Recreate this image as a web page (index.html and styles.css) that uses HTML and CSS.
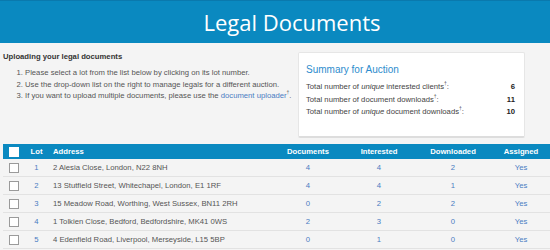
FILE: index.html
```html
<!DOCTYPE html>
<html lang="en">
<head>
    <meta charset="UTF-8">
    <meta name="viewport" content="width=device-width, initial-scale=1.0">
    <link rel="stylesheet" href="styles.css">
    <title>Legal Documents</title>
</head>
<body>

    <div class="banner">
        <h1>Legal Documents</h1>
    </div>

    <div class="intro">
        <div class="help">
            <h3>Uploading your legal documents</h3>
            <ol>
                <li>Please select a lot from the list below by clicking on its lot number.</li>
                <li>Use the drop-down list on the right to manage legals for a different auction.</li>
                <li>If you want to upload multiple documents, please use the <a href="#">document uploader</a><sup>†</sup>.</li>
            </ol>
        </div>

        <div class="summary">
            <h2>Summary for Auction</h2>
            <div class="summary-row">
                <span>Total number of <em>unique</em> interested clients<sup>†</sup>:</span>
                <b>6</b>
            </div>
            <div class="summary-row">
                <span>Total number of document downloads<sup>†</sup>:</span>
                <b>11</b>
            </div>
            <div class="summary-row">
                <span>Total number of <em>unique</em> document downloads<sup>†</sup>:</span>
                <b>10</b>
            </div>
        </div>
    </div>

    <table class="lots">
        <thead>
            <tr>
                <th class="col-check"><span class="box box-head"></span></th>
                <th class="col-lot">Lot</th>
                <th class="col-address">Address</th>
                <th class="col-docs">Documents</th>
                <th class="col-int">Interested</th>
                <th class="col-down">Downloaded</th>
                <th class="col-assigned">Assigned</th>
            </tr>
        </thead>
        <tbody>
            <tr>
                <td><span class="box"></span></td>
                <td class="num"><a href="#">1</a></td>
                <td class="address">2 Alesia Close, London, N22 8NH</td>
                <td class="num"><a href="#">4</a></td>
                <td class="num"><a href="#">4</a></td>
                <td class="num"><a href="#">2</a></td>
                <td class="num"><a href="#">Yes</a></td>
            </tr>
            <tr>
                <td><span class="box"></span></td>
                <td class="num"><a href="#">2</a></td>
                <td class="address">13 Stutfield Street, Whitechapel, London, E1 1RF</td>
                <td class="num"><a href="#">4</a></td>
                <td class="num"><a href="#">4</a></td>
                <td class="num"><a href="#">1</a></td>
                <td class="num"><a href="#">Yes</a></td>
            </tr>
            <tr>
                <td><span class="box"></span></td>
                <td class="num"><a href="#">3</a></td>
                <td class="address">15 Meadow Road, Worthing, West Sussex, BN11 2RH</td>
                <td class="num"><a href="#">0</a></td>
                <td class="num"><a href="#">2</a></td>
                <td class="num"><a href="#">2</a></td>
                <td class="num"><a href="#">Yes</a></td>
            </tr>
            <tr>
                <td><span class="box"></span></td>
                <td class="num"><a href="#">4</a></td>
                <td class="address">1 Tolkien Close, Bedford, Bedfordshire, MK41 0WS</td>
                <td class="num"><a href="#">2</a></td>
                <td class="num"><a href="#">3</a></td>
                <td class="num"><a href="#">0</a></td>
                <td class="num"><a href="#">Yes</a></td>
            </tr>
            <tr>
                <td><span class="box"></span></td>
                <td class="num"><a href="#">5</a></td>
                <td class="address">4 Edenfield Road, Liverpool, Merseyside, L15 5BP</td>
                <td class="num"><a href="#">0</a></td>
                <td class="num"><a href="#">1</a></td>
                <td class="num"><a href="#">0</a></td>
                <td class="num"><a href="#">Yes</a></td>
            </tr>
        </tbody>
    </table>

</body>
</html>
```

FILE: styles.css
```css
body {
    font-family: 'Liberation Sans', Arial, sans-serif;
    font-size: 7.7px;
    color: #444;
    background-color: #f4f4f4;
    margin: 0;
    padding: 0;
    overflow: hidden;
}

a {
    color: #4a7cc2;
    text-decoration: none;
}

sup {
    font-size: 5px;
    line-height: 0;
}

.banner {
    height: 42px;
    background-color: #0a89c0;
    border-top: 1px solid #0a79ad;
}

.banner h1 {
    margin: 0;
    padding-left: 34px;
    text-align: center;
    font-family: 'Open Sans', sans-serif;
    font-weight: 400;
    font-size: 22px;
    line-height: 42px;
    color: #fff;
}

.intro {
    display: flex;
    justify-content: space-between;
    padding-top: 9px;
    height: 92px;
}

.help {
    padding-left: 3px;
    white-space: nowrap;
}

.help h3 {
    margin: 0;
    font-size: 7.7px;
    line-height: 10px;
    color: #333;
}

.help ol {
    margin: 5px 0 0;
    padding-left: 22px;
    color: #555;
}

.help li {
    line-height: 11.5px;
}

.summary {
    flex-shrink: 0;
    width: 210px;
    height: 73px;
    margin-right: 25px;
    padding: 10px 8px 0 7px;
    background-color: #fff;
    border: 1px solid #e6e6e6;
    border-bottom: 2px solid #ddd;
    border-radius: 2px;
    color: #444;
}

.summary h2 {
    margin: 0 0 4px;
    font-size: 10px;
    font-weight: 400;
    color: #2d8ccd;
    line-height: 14px;
}

.summary-row {
    display: flex;
    justify-content: space-between;
    line-height: 12.5px;
    padding-right: 1px;
}

.summary-row b {
    color: #222;
}

.lots {
    margin-left: 3px;
    width: 547px;
    border-collapse: collapse;
    table-layout: fixed;
}

.lots th {
    background-color: #0a89c0;
    color: #fff;
    font-weight: bold;
    height: 15px;
    padding: 0;
    text-align: center;
}

.lots th.col-address {
    text-align: left;
    padding-left: 8px;
}

.col-check { width: 25px; }
.col-lot { width: 17px; }
.col-docs { width: 72px; }
.col-int { width: 70px; }
.col-down { width: 78px; }
.col-assigned { width: 58px; }

.lots td {
    height: 17px;
    padding: 0;
    border-bottom: 1px solid #e2e2e2;
    color: #555;
}

.lots td.num {
    text-align: center;
}

.lots td.address {
    padding-left: 8px;
}

.box {
    display: block;
    width: 8px;
    height: 8px;
    margin-left: 6px;
    background-color: #fff;
    border: 1px solid #9a9a9a;
}

.box-head {
    border-color: #fff;
}
```
